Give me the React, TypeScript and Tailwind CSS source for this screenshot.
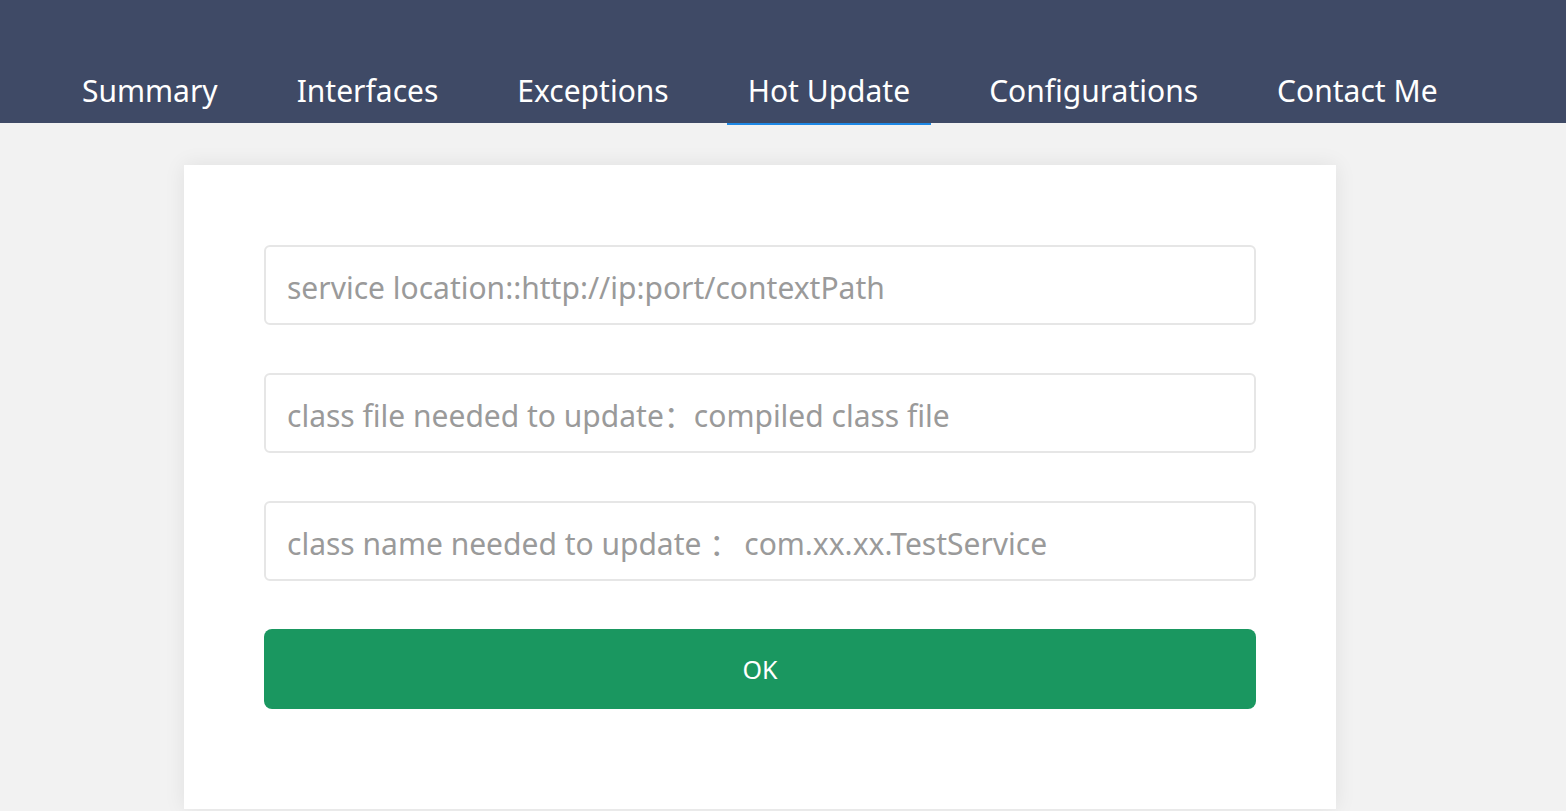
import React from "react";

const tabs = ["Summary", "Interfaces", "Exceptions", "Hot Update", "Configurations", "Contact Me"];

export default function App() {
  return (
    <div className="min-h-[811px] bg-[#f2f2f2]" style={{ fontFamily: '"Noto Sans", "Noto Sans CJK SC", sans-serif' }}>
      <header className="h-[123px] bg-[#3f4a66] flex items-end pl-[61px]">
        <nav className="flex gap-[37px]">
          {tabs.map((t) => (
            <div
              key={t}
              className={
                "px-[21px] pt-[2px] h-[68px] flex items-center text-[30px] text-white relative " +
                (t === "Hot Update" ? "after:content-[''] after:absolute after:left-0 after:right-0 after:bottom-[-2px] after:h-[2px] after:bg-[#1e88e5]" : "")
              }
            >
              {t}
            </div>
          ))}
        </nav>
      </header>
      <main className="flex pt-[42px] pl-[184px]">
        <div className="w-[1152px] bg-white shadow-[0_0_20px_rgba(0,0,0,0.08)] px-[80px] pt-[80px] pb-[100px] flex flex-col gap-[48px]">
          {[
            "service location::http://ip:port/contextPath",
            "class file needed to update：compiled class file",
            "class name needed to update ：\u2009com.xx.xx.TestService",
          ].map((p) => (
            <input
              key={p}
              placeholder={p}
              className="h-[80px] w-full border-2 border-[#e6e6e6] rounded-[6px] px-[21px] pt-[4px] text-[30px] text-[#333] placeholder:text-[#9a9a9a] outline-none"
            />
          ))}
          <button className="h-[80px] w-full rounded-[8px] bg-[#1a9760] text-white text-[25px] pt-[2px]">OK</button>
        </div>
      </main>
    </div>
  );
}
